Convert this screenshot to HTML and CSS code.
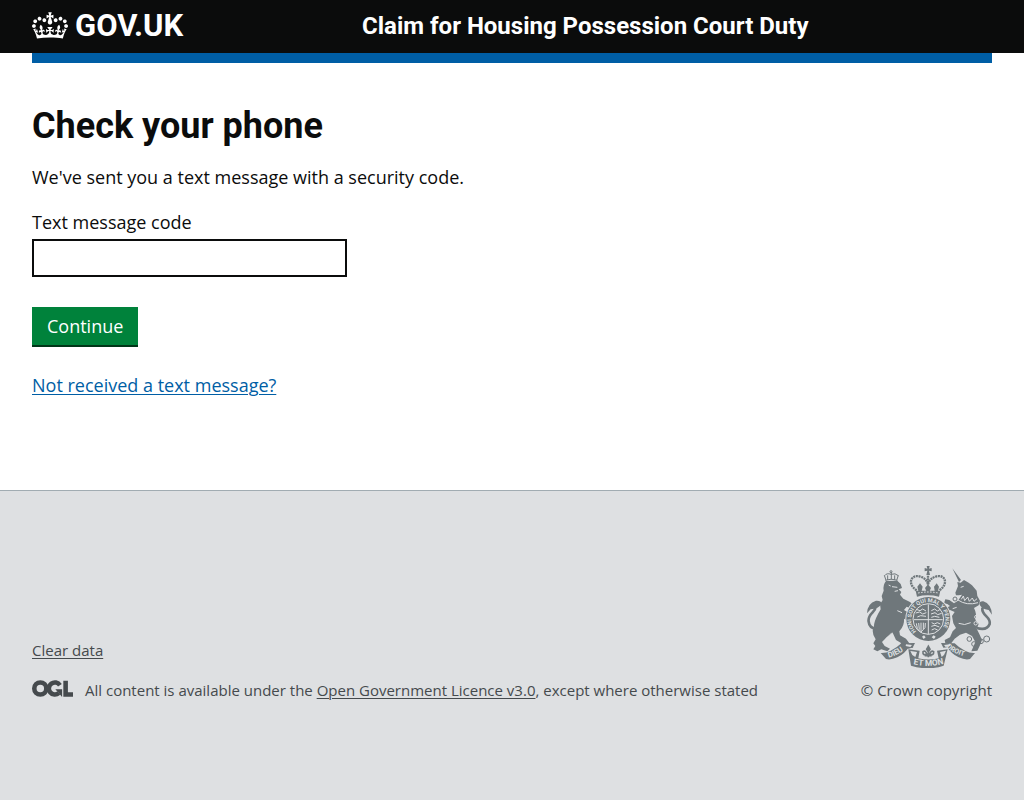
FILE: index.html
```
<!DOCTYPE html>
<html lang="en">
<head>
<meta charset="utf-8">
<meta name="viewport" content="width=device-width, initial-scale=1">
<title>Check your phone - Claim for Housing Possession Court Duty</title>
<link rel="stylesheet" href="styles.css">
</head>
<body class="page">
<header class="header">
  <div class="container header-row">
    <a class="brand" href="#">
      <svg class="crown" viewBox="0 0 132 97" width="36" height="27" aria-hidden="true"><path fill="currentColor" fill-rule="evenodd" d="M25 30.2c3.5 1.5 7.7-.2 9.1-3.7 1.5-3.6-.2-7.8-3.9-9.2-3.6-1.4-7.6.3-9.1 3.9-1.4 3.5.3 7.5 3.9 9zM9 39.5c3.6 1.5 7.8-.2 9.2-3.7 1.5-3.6-.2-7.8-3.9-9.1-3.6-1.5-7.6.2-9.1 3.8-1.4 3.5.3 7.5 3.8 9zM4.4 57.2c3.5 1.5 7.7-.2 9.1-3.8 1.5-3.6-.2-7.7-3.9-9.1-3.5-1.5-7.6.3-9.1 3.8-1.4 3.5.3 7.6 3.9 9.1zm38.3-21.4c3.5 1.5 7.7-.2 9.1-3.8 1.5-3.6-.2-7.7-3.9-9.1-3.6-1.5-7.6.3-9.1 3.8-1.3 3.6.4 7.7 3.9 9.1zm64.4-5.6c-3.6 1.5-7.8-.2-9.1-3.7-1.5-3.6.2-7.8 3.8-9.2 3.6-1.4 7.7.3 9.2 3.9 1.3 3.5-.4 7.5-3.9 9zm15.9 9.3c-3.6 1.5-7.7-.2-9.1-3.7-1.5-3.6.2-7.8 3.7-9.1 3.6-1.5 7.7.2 9.2 3.8 1.5 3.5-.3 7.5-3.8 9zm4.7 17.7c-3.6 1.5-7.8-.2-9.2-3.8-1.5-3.6.2-7.7 3.9-9.1 3.6-1.5 7.7.3 9.2 3.8 1.3 3.5-.4 7.6-3.9 9.1zM89.3 35.8c-3.6 1.5-7.8-.2-9.2-3.8-1.4-3.6.2-7.7 3.9-9.1 3.6-1.5 7.7.3 9.2 3.8 1.4 3.6-.3 7.7-3.9 9.1zM69.7 17.7l8.9 4.7V9.3l-8.9 2.8c-.2-.3-.5-.6-.9-.9L72.4 0H59.6l3.5 11.2c-.3.3-.6.5-.9.9l-8.8-2.8v13.1l8.8-4.7c.3.3.6.7.9.9l-5 15.4v.1c-.2.8-.4 1.6-.4 2.4 0 4.1 3.1 7.5 7 8.1h.2c.3 0 .7.1 1 .1.4 0 .7 0 1-.1h.2c4-.6 7.1-4.1 7.1-8.1 0-.8-.1-1.7-.4-2.4V34l-5.1-15.4c.4-.2.7-.6 1-.9zM66 92.8c16.9 0 32.8 1.1 47.1 3.2 4-16.9 8.9-26.7 14-33.5l-9.6-3.4c1 4.9 1.1 7.2 0 10.2-1.5-1.4-3-4.3-4.2-8.7L108.6 76c2.8-2 5-3.2 7.5-3.3-4.4 9.4-10 11.9-13.6 11.2-4.3-.8-6.3-4.6-5.6-7.9 1-4.7 5.7-5.9 8-.5 4.3-8.7-3-11.4-7.6-8.8 7.1-7.2 7.9-13.5 2.1-21.1-8 6.1-8.1 12.3-4.5 20.8-4.7-5.4-12.1-2.5-9.5 6.2 3.4-5.2 7.9-2 7.2 3.1-.6 4.3-6.4 7.8-13.5 7.2-10.3-.9-10.9-8-11.2-13.8 2.5-.5 7.1 1.8 11 7.3L80.2 60c-4.1 4.4-8 5.3-12.3 5.4 1.4-4.4 8-11.6 8-11.6H55.5s6.4 7.2 7.9 11.6c-4.2-.1-8-1-12.3-5.4l1.4 16.4c3.9-5.5 8.5-7.7 10.9-7.3-.3 5.8-.9 12.8-11.1 13.8-7.2.6-12.9-2.9-13.5-7.2-.7-5 3.8-8.3 7.1-3.1 2.7-8.7-4.6-11.6-9.4-6.2 3.7-8.5 3.6-14.7-4.6-20.8-5.8 7.6-5 13.9 2.2 21.1-4.7-2.6-11.9.1-7.7 8.8 2.3-5.5 7.1-4.2 8.1.5.7 3.3-1.3 7.1-5.7 7.9-3.5.7-9-1.8-13.5-11.2 2.5.1 4.7 1.3 7.5 3.3l-4.7-15.4c-1.2 4.4-2.7 7.2-4.3 8.7-1.1-3-.9-5.3 0-10.2l-9.5 3.4c5 6.9 9.9 16.7 14 33.5 14.8-2.1 30.8-3.2 47.7-3.2z"/></svg>
      <span>GOV.UK</span>
    </a>
    <a class="service" href="#">Claim for Housing Possession Court Duty</a>
  </div>
</header>
<div class="container"><div class="bar"></div></div>
<main class="container main">
  <h1 class="title">Check your phone</h1>
  <p class="lead">We've sent you a text message with a security code.</p>
  <form class="form">
    <label class="label" for="code">Text message code</label>
    <input class="input" id="code" name="code" type="text" inputmode="numeric" autocomplete="one-time-code">
    <button class="button" type="button">Continue</button>
  </form>
  <a class="link" href="#">Not received a text message?</a>
</main>
<footer class="footer">
  <div class="container footer-row">
    <div class="footer-main">
      <a class="footer-link" href="#">Clear data</a>
      <div class="licence">
        <svg class="ogl" viewBox="0 0 483 196" width="41" height="17" role="img" aria-label="Open Government Licence"><g fill="none" stroke="currentColor" stroke-width="54"><circle cx="98" cy="98" r="71"/><path d="M329 59A71 71 0 1 0 316 152"/><path d="M396 8V168H483"/></g><path fill="currentColor" d="M275 106h80v88h-3z"/></svg>
        <span>All content is available under the <a class="footer-link" href="#">Open Government Licence v3.0</a>, except where otherwise stated</span>
      </div>
    </div>
    <a class="copyright" href="#">
      <svg class="arms" viewBox="21 18 375 306" width="125" height="102" aria-hidden="true">
        <defs>
          <path id="garter" d="M169 214A51 51 0 1 1 245 209"/>
          <path id="dieu" d="M86 293Q115 286 145 261"/>
          <path id="motto" d="M160 313Q205 323 252 311"/>
          <path id="droit" d="M259 261Q286 286 330 293"/>
        </defs>
        <g class="ink">
          <path d="M78 63Q68 75 71 92L65 108 68 120 60 133 62 148 54 162Q42 185 42 198L38 212Q38 225 47 238L40 250 46 258 40 268 52 274 64 268 82 274 90 266 74 258 66 246 80 232 98 218 108 240 122 248 128 262 146 266 160 262 148 250 138 236 120 226 118 214Q134 196 132 176L150 186 158 174 146 158 132 150 140 140 158 148 164 138 150 126 130 116 120 104 124 96 116 88 126 84 122 72 112 62Z"/>
          <path d="M277 25L303 60 297 66ZM286 98L294 78 292 66 302 68 312 60 326 68 336 76 350 92 352 108 360 122 356 136 342 144Q352 164 346 180L356 192 350 206 358 222 366 240 360 256 352 272 334 274 340 260 346 246 336 228 318 218 300 224 284 236 272 252 256 250 254 240 270 232 278 214 288 204 280 190 276 168 284 156 270 150 258 156 254 146 270 138 262 132 252 130 256 118 268 120 282 130 294 122 306 104 296 106 288 106Z"/>
        </g>
        <g class="line" stroke-width="8">
          <path d="M50 206Q28 206 26 185C22 162 46 156 46 144Q44 134 31 141"/>
          <path d="M350 204Q381 213 389 192C394 171 365 167 367 146Q371 134 386 144"/>
        </g>
        <path class="ink" d="M21 160Q22 130 48 122Q64 121 65 131Q56 146 32 148ZM396 164Q394 132 370 124Q358 123 358 132Q364 148 386 150Z"/>
        <g class="line" stroke-width="3">
          <path d="M78 61L73 46M110 61L115 46M83 60V46M94 59V36M104 60V46M76 61Q94 54 112 61"/>
          <path d="M74 47Q80 38 93 43Q106 38 115 47"/>
          <circle cx="93" cy="35" r="3"/>
          <circle cx="285" cy="117" r="6"/><circle cx="328" cy="237" r="7"/><circle cx="342" cy="252" r="7"/><circle cx="363" cy="244" r="7"/><circle cx="380" cy="237" r="9"/>
        </g>
        <g class="paper-line" stroke-width="3">
          <path d="M96 80l16 2M86 75l6 3M104 94l10-2M302 82l9-3M294 120q26 18 60 8M304 118l6-10 4 14 9-11 5 13 9-10 5 10 9-8"/>
          <path d="M78 236l18-18M296 190q18 8 36-2M126 158l-14-6M290 142l-12 4"/>
          <circle cx="349" cy="171" r="5"/><circle cx="347" cy="190" r="5"/>
        </g>
        <g class="line" stroke-width="7" stroke-dasharray="6 2">
          <path d="M170 91C139 70 155 43 178 49Q199 54 204 73Q209 54 230 49C254 43 268 70 238 91M204 47v27"/>
        </g>
        <path class="ink" d="M200 18h9l-2 8 8-2v10l-8-2 3 13h-11l3-13-8 2V24l8 2zM167 92h74l-4 18q-34-8-66 0zM180 70l8 10-3 12h-10l-3-12zM204 73l9 11-4 9h-10l-4-9zM230 70l7 10-3 12h-10l-2-12z"/>
        <path class="paper-line" stroke-width="3" stroke-dasharray="5 4" d="M174 99q31-6 61 0"/>
        <circle class="paper" cx="205" cy="177" r="69"/>
        <circle class="ink" cx="205" cy="177" r="66"/>
        <circle class="paper-line" cx="205" cy="177" r="46" stroke-width="3"/>
        <text class="words" font-size="17"><textPath href="#garter">HONI SOIT QUI MAL Y PENSE</textPath></text>
        <path class="paper" d="M186 230l6-4 5 6-6 5zM215 232l6-6 6 4-5 7z"/>
        <g class="paper-line" stroke-width="3">
          <path d="M205 133v90M162 179h86M169 148l11 4 8-5 10 6M167 159l12-3 9 6 11-4M172 171l10-4 16 2M214 152l10-5 8 6 9-5M213 162l12-4 8 6 12-4M214 172l10-3 14 3M169 190l3 16 10 11 13-14 1-14M176 189l2 20M183 188v25M190 188v19M215 188l8 4 9-4 9 4M214 199l11-3 13 5M215 210l9-4 9 4"/>
        </g>
        <path class="ink" d="M62 279Q78 280 92 272Q112 262 124 250L165 249 158 263 146 262Q134 282 112 292Q92 301 78 297ZM345 279Q329 280 315 272Q295 262 284 250L243 249 250 263 262 262Q274 282 296 292Q316 301 330 297ZM145 268l34 4-4 23q30 7 61 0l-5-23 32-4-12 49q-47 16-98 0z"/>
        <path class="paper" d="M151 273l20 3-5 15-9-6zM258 272l-18 4 5 15 7-6zM138 253l18 2-5 6-14-3zM270 253l-18 2 5 6 14-3z"/>
        <circle class="paper" cx="204" cy="272" r="20"/>
        <path class="line" stroke-width="5" d="M205 257v35M205 259l-5 9 5 8 5-8zM202 282q-15 6-13-7 8-5 11 7h9q4-12 12-7 1 13-13 7M194 287h21"/>
        <text class="words" font-size="23"><textPath href="#dieu">DIEU</textPath></text>
        <text class="words" font-size="25"><textPath href="#motto">ET MON</textPath></text>
        <text class="words" font-size="21"><textPath href="#droit">DROIT</textPath></text>
      </svg>
      <span>© Crown copyright</span>
    </a>
  </div>
</footer>
</body>
</html>
```
FILE: styles.css
```
* { box-sizing: border-box; }
.page {
  margin: 0;
  min-height: 100vh;
  display: flex;
  flex-direction: column;
  background: #dee0e2;
  color: #0b0c0c;
  font-family: "Open Sans", sans-serif;
  font-size: 18px;
  line-height: 25px;
}
.container { width: 100%; padding: 0 32px; }
.header { background: #0b0c0c; color: #fff; font-family: Roboto, sans-serif; font-weight: 700; line-height: 30px; }
.header-row { display: flex; align-items: center; min-height: 53px; padding-bottom: 2px; }
.brand {
  flex: 0 0 calc((100% + 30px) / 3);
  display: flex;
  align-items: center;
  gap: 7px;
  color: inherit;
  font-size: 31px;
  text-decoration: none;
}
.service { color: inherit; font-size: 24px; text-decoration: none; }
.header + .container, .main { background: #fff; }
.bar { height: 10px; background: #005ea5; }
.main { padding-top: 43px; padding-bottom: 92px; }
.title { margin: 0 0 19px; font-family: Roboto, sans-serif; font-size: 36px; font-weight: 700; line-height: 40px; }
.lead { margin: 0 0 20px; }
.form { display: flex; flex-direction: column; align-items: flex-start; margin-bottom: 26px; }
.label { margin-bottom: 4px; }
.input { width: 315px; max-width: 100%; height: 38px; margin-bottom: 30px; padding: 4px; border: 2px solid #0b0c0c; border-radius: 0; background: #fff; font: inherit; }
.button { height: 40px; padding: 0 15px; border: 0; border-bottom: 2px solid #003618; background: #00823b; color: #fff; font: inherit; }
.link { color: #005ea5; text-decoration-thickness: 1px; text-underline-offset: 2px; }
.footer { flex: 1; border-top: 1px solid #a1acb2; color: #454a4d; font-size: 15px; line-height: 20px; }
.footer-row { display: flex; align-items: flex-end; justify-content: space-between; gap: 30px; padding-top: 75px; padding-bottom: 60px; }
.footer-link { color: inherit; text-decoration-thickness: 1px; text-underline-offset: 2px; }
.licence { display: flex; align-items: flex-start; gap: 12px; margin-top: 20px; }
.ogl { flex: none; }
.copyright { display: flex; flex-direction: column; align-items: flex-end; gap: 12px; color: inherit; text-decoration: none; white-space: nowrap; }
.arms { display: block; }
.ink { fill: #6f777b; }
.paper { fill: #dee0e2; }
.line { fill: none; stroke: #6f777b; }
.paper-line { fill: none; stroke: #dee0e2; }
.words { fill: #dee0e2; font-family: Roboto, sans-serif; font-weight: 700; }
```
